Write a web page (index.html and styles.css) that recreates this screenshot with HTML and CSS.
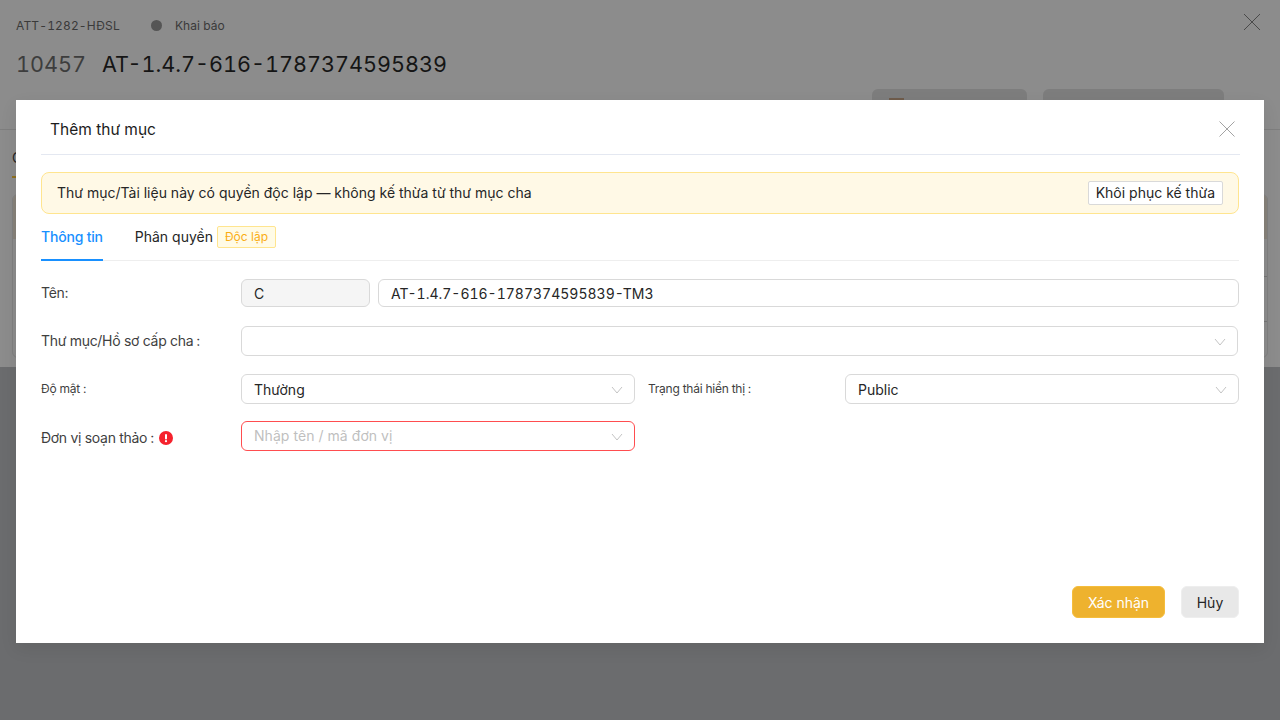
FILE: index.html
```html
<!DOCTYPE html>
<html lang="vi">
<head>
<meta charset="utf-8">
<title>Thêm thư mục</title>
<link rel="stylesheet" href="styles.css">
</head>
<body>
<div class="page">
  <header class="page-head">
    <div class="meta-row">
      <span class="code">ATT-1282-HĐSL</span>
      <span class="dot"></span>
      <span class="status">Khai báo</span>
    </div>
    <div class="title-row"><span class="num">10457</span><span class="name">AT-1.4.7-616-1787374595839</span></div>
    <div class="head-actions">
      <span class="ghost g1"><i class="ghost-icon"></i></span>
      <span class="ghost g2"></span>
    </div>
    <svg class="page-close" width="18" height="18" viewBox="0 0 18 18"><path d="M1 1l16 16M17 1L1 17" stroke="#4a4a4a" stroke-width="1" fill="none"/></svg>
  </header>
  <div class="page-body">
    <div class="page-tab">Chi tiết</div>
    <div class="card-stub">
      <div class="card-band"></div>
      <div class="card-line l1"></div>
      <div class="card-line l2"></div>
    </div>
  </div>
</div>

<section class="modal">
  <div class="modal-head">
    <h2>Thêm thư mục</h2>
    <svg class="modal-close" width="16" height="16" viewBox="0 0 16 16"><path d="M.5.5l15 15M15.5.5l-15 15" stroke="#a3a3a3" stroke-width="1" fill="none"/></svg>
  </div>
  <div class="alert">
    <span>Thư mục/Tài liệu này có quyền độc lập — không kế thừa từ thư mục cha</span>
    <button class="restore">Khôi phục kế thừa</button>
  </div>
  <div class="tabs">
    <span class="tab active">Thông tin</span>
    <span class="tab">Phân quyền<em class="badge">Độc lập</em></span>
  </div>
  <form class="form">
    <div class="row row-name">
      <label>Tên:</label>
      <div class="field prefix">C</div>
      <div class="field grow tnum">AT-1.4.7-616-1787374595839-TM3</div>
    </div>
    <div class="row row-parent">
      <label>Thư mục/Hồ sơ cấp cha<i>:</i></label>
      <div class="field select grow tall"><svg class="chev" width="12" height="8" viewBox="0 0 12 8"><path d="M1 1l5 6 5-6" stroke="#c4c4c4" fill="none"/></svg></div>
    </div>
    <div class="row row-split">
      <label class="small">Độ mật<i>:</i></label>
      <div class="field select half tall">Thường<svg class="chev" width="12" height="8" viewBox="0 0 12 8"><path d="M1 1l5 6 5-6" stroke="#c4c4c4" fill="none"/></svg></div>
      <label class="small second">Trạng thái hiển thị<i>:</i></label>
      <div class="field select half tall">Public<svg class="chev" width="12" height="8" viewBox="0 0 12 8"><path d="M1 1l5 6 5-6" stroke="#c4c4c4" fill="none"/></svg></div>
    </div>
    <div class="row row-unit">
      <label>Đơn vị soạn thảo<i>:</i>
        <svg class="err" width="14" height="14" viewBox="0 0 14 14"><circle cx="7" cy="7" r="7" fill="#f5222d"/><rect x="6" y="3" width="2" height="5.4" rx="1" fill="#fff"/><circle cx="7" cy="10.2" r="1.1" fill="#fff"/></svg>
      </label>
      <div class="field select half tall invalid"><span class="ph">Nhập tên / mã đơn vị</span><svg class="chev" width="12" height="8" viewBox="0 0 12 8"><path d="M1 1l5 6 5-6" stroke="#c4c4c4" fill="none"/></svg></div>
    </div>
  </form>
  <div class="foot">
    <button class="btn primary">Xác nhận</button>
    <button class="btn plain">Hủy</button>
  </div>
</section>
</body>
</html>
```
FILE: styles.css
```css
* { box-sizing: border-box; }
html, body { margin: 0; height: 720px; overflow: hidden; }
body { font-family: Inter, "Noto Sans", sans-serif; color: #1f1f1f; background: #6b6c6e; position: relative; }
.page { height: 367px; background: #8c8c8c; display: flex; flex-direction: column; }
.page-head { height: 130px; border-bottom: 1px solid #7e7e7e; padding: 17px 16px 0; position: relative; }
.meta-row { display: flex; align-items: center; height: 16px; font-size: 12px; color: #3a3a3a; }
.code { width: 135px; font-feature-settings: "tnum"; letter-spacing: .15px; }
.dot { width: 11px; height: 11px; border-radius: 50%; background: #555; margin-right: 13px; }
.status { font-size: 12px; }
.title-row { display: flex; margin-top: 16px; font-size: 21.6px; line-height: 30px; font-feature-settings: "tnum"; }
.num { color: #3d3d3d; width: 86px; flex: none; }
.name { color: #151515; }
.head-actions { position: absolute; top: 89px; left: 872px; display: flex; gap: 16px; }
.ghost { height: 30px; border-radius: 6px; background: #7d7d7d; display: block; padding: 9px 0 0 17px; }
.ghost-icon { display: block; width: 15px; height: 15px; background: #6f5c4b; }
.g1 { width: 155px; }
.g2 { width: 181px; }
.page-close { position: absolute; top: 13px; left: 1243px; }
.page-body { flex: 1; position: relative; }
.page-tab { position: absolute; left: 12px; top: 19px; height: 29px; font-size: 14px; line-height: 17px; color: #262626; border-bottom: 2px solid #8f7120; }
.card-stub { position: absolute; left: 12px; right: 12px; top: 64px; bottom: 9px; border: 1px solid #7f7f7f; border-radius: 6px; overflow: hidden; }
.card-band { height: 44px; background: #87827a; }
.card-line { position: absolute; right: 0; width: 600px; height: 1px; background: #757575; }
.l1 { top: 81px; }
.l2 { top: 126px; }

.modal { position: absolute; left: 16px; top: 100px; width: 1248px; height: 543px; background: #fff; box-shadow: 0 6px 16px rgba(0,0,0,.08); padding: 0 25px; display: flex; flex-direction: column; z-index: 2; }
.modal-head { height: 55px; margin-right: -1px; border-bottom: 1px solid #e4e8f1; display: flex; align-items: center; justify-content: space-between; padding: 3px 5px 0 9px; flex: none; }
.modal-head h2 { margin: 0; padding-top: 1px; font-size: 15.5px; font-weight: 400; color: #1c1c1c; }
.modal-close { display: block; }
.alert { margin-top: 17px; height: 42px; flex: none; border: 1px solid #ffe58f; background: #fff9e6; border-radius: 8px; display: flex; align-items: center; justify-content: space-between; padding: 0 15px 1px; font-size: 14px; color: #262626; }
.restore { font: inherit; font-size: 14px; color: #262626; height: 24px; padding: 0 7px 1px; margin-top: 1px; background: #fff; border: 1px solid #d9d9d9; border-radius: 2px; }
.tabs { display: flex; gap: 32px; height: 47px; border-bottom: 1px solid #eee; font-size: 14px; flex: none; }
.tab { display: flex; align-items: center; height: 47px; color: #262626; padding-bottom: 2px; }
.tab.active { color: #1890ff; border-bottom: 2px solid #1890ff; padding-bottom: 0; font-weight: 500; letter-spacing: -.2px; }
.badge { font-style: normal; font-size: 12px; color: #faad14; background: #fffbe6; border: 1px solid #ffe58f; border-radius: 2px; height: 22px; line-height: 20px; padding: 0 7px; margin-left: 4px; }
.form { display: flex; flex-direction: column; flex: none; }
.row { display: flex; align-items: flex-start; font-size: 14px; }
.row label { width: 200px; flex: none; color: #3f3f3f; line-height: 20px; letter-spacing: -.3px; }
.row label i { font-style: normal; margin-left: 3px; }
.row label.small { font-size: 12px; letter-spacing: -.25px; }
.row label.second { width: 197px; margin-left: 13px; }
.row-name { margin-top: 18px; }
.row-parent { margin-top: 19px; }
.row-split { margin-top: 18px; }
.row-unit { margin-top: 17px; }
.row-name label { padding-top: 4px; }
.row-parent label { padding-top: 5px; }
.row-split label { padding-top: 5px; }
.row-unit label { padding-top: 7px; display: flex; align-items: center; }
.err { margin-left: 5px; }
.field { border: 1px solid #d9d9d9; border-radius: 6px; background: #fff; height: 28px; padding: 0 12px; display: flex; align-items: center; position: relative; color: #262626; }
.prefix { width: 129px; background: #f5f5f5; margin-right: 8px; }
.grow { flex: 1; }
.tnum { font-feature-settings: "tnum"; }
.tall { height: 30px; }
.row-parent .field { margin-right: 1px; }
.half { width: 394px; flex: none; }
.invalid { border-color: #ff4d4f; }
.ph { color: #bfbfbf; margin-top: -1px; letter-spacing: .05px; }
.chev { position: absolute; right: 11px; top: 11px; }
.foot { margin-top: auto; padding-bottom: 25px; display: flex; justify-content: flex-end; gap: 16px; }
.btn { font: inherit; font-size: 14px; height: 32px; border-radius: 6px; border: 1px solid transparent; }
.primary { width: 93px; background: #eeb22e; border-color: #f5bd3c; color: #fff; }
.plain { width: 58px; background: #e8e8e8; border-color: #eee; color: #262626; }
```
